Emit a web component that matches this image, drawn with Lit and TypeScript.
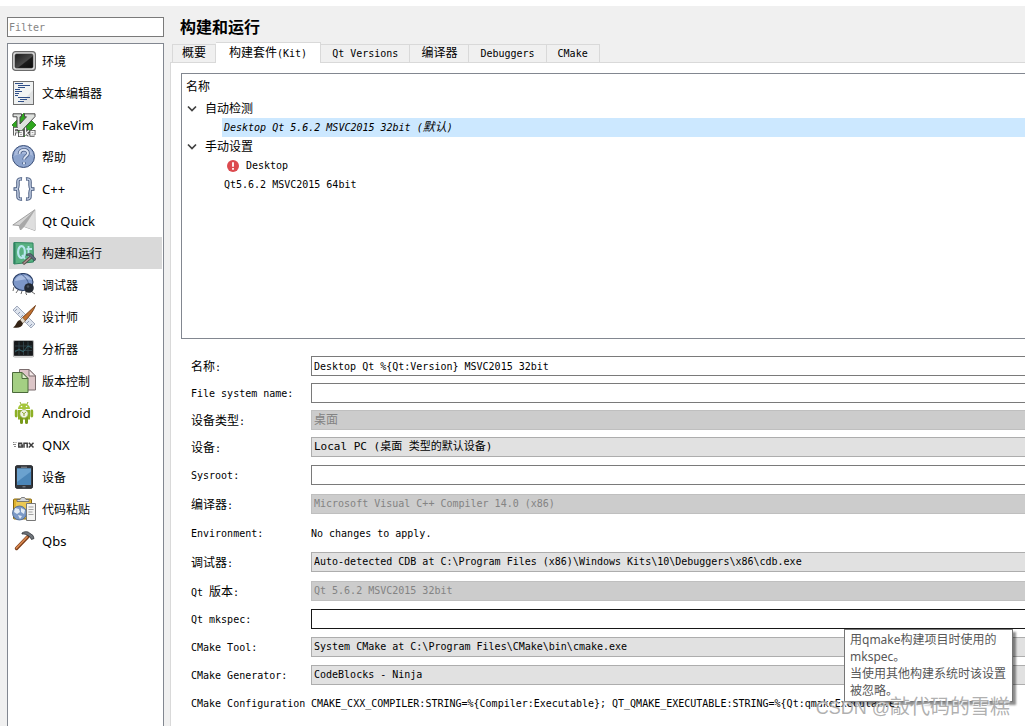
import { LitElement, html, svg, css, nothing } from "lit";
import { customElement, state } from "lit/decorators.js";

const icons: Record<string, unknown> = {
  env: svg`
    <defs><linearGradient id="g" x1="0" y1="0" x2="1" y2="1"><stop offset="0" stop-color="#1c1c1c"/><stop offset=".55" stop-color="#484848"/><stop offset=".6" stop-color="#1a1a1a"/><stop offset="1" stop-color="#0c0c0c"/></linearGradient></defs>
    <rect x=".6" y="2.6" width="22.8" height="18.8" rx="3" fill="#dcdcdc" stroke="#6b6b6b" stroke-width="1.2"/>
    <rect x="3" y="5" width="18" height="14" rx="1.5" fill="url(#g)" stroke="#333" stroke-width=".6"/>`,
  text: svg`
    <rect x="1.5" y=".5" width="20" height="23" fill="#f1f3f3" stroke="#6f6f6f" stroke-width="1"/>
    <path d="M21 9v14H8z" fill="#e0e2e3"/>
    <path d="M3 2.5h8M6 4.500h12M6 6.500h7M3 8.500h5M3 10.500h7M3 12.500h4M3 14.500h3M6 16.500h12M8 18.500h7M6 20.500h6" stroke="#2f4f88" stroke-width="1"/>`,
  vim: svg`
    <path d="M12 0l12 12-12 12L0 12z" fill="#2fa71f" stroke="#1d6612" stroke-width=".7"/>
    <path d="M1 .8h8.500v3H8v7.200l6.500-7.200h-2v-3H23v2.800L10 17.500H5V3.800H1z" fill="#dfe2df" stroke="#4a4a4a" stroke-width="1"/>
    <g fill="none" stroke="#4a4a4a" stroke-width="3"><path d="M2.500 22.500v-7h3.500M2.500 18.800h3M7.500 18.500h3v4h-3v-2h3M13.500 14.500v8M17 17.500l-3 2.500 3 2.500M22.500 22.200h-3.500v-3.700h3v2h-3"/></g>
    <g fill="none" stroke="#f6f6f6" stroke-width="1.300"><path d="M2.500 22.500v-7h3.500M2.500 18.800h3M7.500 18.500h3v4h-3v-2h3M13.500 14.500v8M17 17.500l-3 2.500 3 2.500M22.500 22.200h-3.500v-3.700h3v2h-3"/></g>`,
  help: svg`
    <circle cx="11.500" cy="11.500" r="11" fill="#8da4cd" stroke="#3c5079" stroke-width="1"/>
    <path d="M2 11a9.500 9.500 0 0 1 19 0c-5-3-13-3-19 0z" fill="#a9badb"/>
    <path d="M7.500 9c0-5.500 8.500-5.500 8.500-.8 0 3-4 3.200-4 6.300M12 17.200v2" fill="none" stroke="#4a5f88" stroke-width="3.600"/>
    <path d="M7.500 9c0-5.500 8.500-5.500 8.500-.8 0 3-4 3.200-4 6.300M12 17.200v2" fill="none" stroke="#d9e2f1" stroke-width="2"/>`,
  cpp: svg`
    <g fill="none" stroke="#42557b" stroke-width="3.400"><path d="M10 2C5 1.500 6 4 6 8s-1 4-4.500 4C5 12 6 12 6 16s-1 6.500 4 6"/><path d="M14 2c5-.5 4 2 4 6s1 4 4.500 4C19 12 18 12 18 16s1 6.500-4 6"/></g>
    <g fill="none" stroke="#c3cfe3" stroke-width="1.500"><path d="M9.400 2.100C5 1.800 6 4 6 8s-1 4-3.600 4C5 12 6 12 6 16s-1 6.200 3.400 5.900"/><path d="M14.600 2.100C19 1.800 18 4 18 8s1 4 3.600 4C19 12 18 12 18 16s1 6.200-3.400 5.900"/></g>`,
  quick: svg`
    <path d="M22.800.8L.8 16l6.200.5 1.500 4.500 3.500-3.500 11 4z" fill="#d4d4d4" stroke="#8f8f8f" stroke-width=".8"/>
    <path d="M22.800.8L7 16.500 8.500 21l3.500-3.500z" fill="#a8a8a8"/><path d="M22.800.8L12 17.500l11 4z" fill="#dedede"/><path d="M22.800.8L12 17.500" stroke="#999" stroke-width=".6"/>`,
  build: svg`
    <path d="M2 1.500L21 2l.5 19L2 23z" fill="#58b181" stroke="#2f8560" stroke-width="1"/><path d="M1.500 1.500l2 1v20l-2 .5z" fill="#2d8261"/>
    <ellipse cx="9.500" cy="11" rx="3.400" ry="5.800" fill="none" stroke="#b8e6ef" stroke-width="2.200"/><path d="M10 14l3 4M16.500 5v8.500q0 2 2 1.500M14.500 8H20" fill="none" stroke="#b8e6ef" stroke-width="1.800"/>
    <path d="M11 23l8-7" stroke="#5a4a48" stroke-width="3"/><path d="M11.500 22.500l7.500-6.500" stroke="#b09a98" stroke-width="1.200"/>
    <path d="M14.500 13.500c2-1.500 4-1 5-.5l4.500 5-1.500 2-4.500-4.500c-1-1-2-1-3.500-1z" fill="#5b6878" stroke="#33373d" stroke-width=".6"/>`,
  debug: svg`
    <path d="M2 14l-1 4M6 17l-2 3M10 18l-1 3M14 18v3l1 1M20 19l3 2" stroke="#444" fill="none" stroke-width=".8"/>
    <ellipse cx="11" cy="9" rx="10" ry="8.500" fill="#7d97c8" stroke="#2b3f66" stroke-width="1.100"/>
    <path d="M3 8c1-7 13-8 17-1-6-2-10 0-17 1z" fill="#a9bce0"/><path d="M9 1c5 3 8 8 8 13" fill="none" stroke="#334c7c" stroke-width=".8"/>
    <circle cx="17" cy="15" r="4.800" fill="#232932"/><circle cx="16" cy="13.500" r="1.300" fill="#4a535f"/>`,
  design: svg`
    <path d="M1 5l4-4 18 18-4 4z" fill="#dde3ed" stroke="#98a3b7" stroke-width=".9"/>
    <path d="M5 4l-2 2M8 7L6 9M11 10l-2 2M17 16l-2 2M20 19l-2 2" stroke="#8b98b0" stroke-width="1"/>
    <path d="M23.500.5L10 13l2.500 3.500C17 12 21.500 6 23.500.5z" fill="#c0702f" stroke="#67330f" stroke-width=".8"/>
    <path d="M10.500 12.500L8 15l2.500 3.500 3-2.500z" fill="#e2d9cc" stroke="#776652" stroke-width=".7"/>
    <path d="M8 15c-4 1-3 5-7 7.500 5 1 9 0 10-4z" fill="#352416"/>`,
  analyze: svg`
    <rect x="1.500" y="3.500" width="20" height="16.500" rx="1.500" fill="#151719" stroke="#b5b5b5" stroke-width="1.200"/>
    <rect x="2.500" y="4.500" width="18" height="13.500" fill="#17191b"/><path d="M7 4.500v13.500M11.500 4.500v13.500M16 4.500v13.500M3 9h17M3 13.500h17" stroke="#34484e" stroke-width=".8"/>
    <path d="M3 15l4-3 4 3 5-6 4 2" stroke="#3c7680" fill="none" stroke-width=".7"/><path d="M2 19.500h19" stroke="#d4d4d4" stroke-width="1.400"/>`,
  vcs: svg`
    <path d="M7.500.5H17l6.500 6.500v14h-16z" fill="#dcc5c7" stroke="#7b6d6e"/><path d="M17 .5V7h6.500z" fill="#f4e8e8" stroke="#7b6d6e"/>
    <path d="M.5 3.500H10l6 6v14H.5z" fill="#a4cf83" stroke="#4b6a3b"/><path d="M10 3.500v6h6z" fill="#dcefcb" stroke="#4b6a3b"/>`,
  android: svg`
    <path d="M8 1l1.500 3M16 1l-1.500 3" stroke="#8da82f"/><path d="M6 8c0-7.500 12-7.500 12 0z" fill="#a5c63b"/><circle cx="9.500" cy="5.500" r=".8" fill="#fff"/><circle cx="14.500" cy="5.500" r=".8" fill="#fff"/>
    <path d="M6 9h12v9.500H6z" fill="#8db025"/><rect x="2.800" y="8.500" width="2.800" height="8" rx="1.400" fill="#8db025"/><rect x="18.400" y="8.500" width="2.800" height="8" rx="1.400" fill="#8db025"/>
    <path d="M9.500 17v4.500M14.500 17v4.500" stroke="#789a1a" stroke-width="3" stroke-linecap="round"/>
    <circle cx="12" cy="12.800" r="4.200" fill="#f0f3e4" stroke="#8aa63c" stroke-width=".8"/><path d="M10 10.800l2 2 2-2M12 12.800v2.200" fill="none" stroke="#83a020" stroke-width="1"/>`,
  qnx: svg`
    <path d="M1 9.500h1.500M1 11.500h3M2 13.500h2M3.500 9.500h1" stroke="#888" stroke-width="1"/>
    <g fill="none" stroke="#3d3d3d" stroke-width="1.500"><path d="M10.300 10.200H6.800v3.800h3.400v-2h-1.700M12 14.800v-4.600h3.200v4.600M16.800 9.700l4.700 4.800M21.500 9.700l-4.700 4.800"/></g>`,
  device: svg`
    <rect x="3.500" y=".7" width="17" height="22.600" rx="1.500" fill="#34383e" stroke="#202328"/>
    <rect x="5" y="3.500" width="14" height="16.500" fill="#4b86b8"/><path d="M5 3.500h14v3L5 17z" fill="#6ba2cf"/><path d="M9 2.200h6M10.500 21.800h3" stroke="#8b9096" stroke-width="1"/>`,
  paste: svg`
    <rect x="1.500" y="2" width="18" height="20" rx="1" fill="#dfb32f" stroke="#84660f"/><rect x="4" y="4.500" width="13" height="8" fill="#ecc954"/>
    <path d="M5 4.500V2.500h3l1.500-2h3l1.500 2h3v2z" fill="#d5d8dc" stroke="#666" stroke-width=".8"/>
    <circle cx="7.500" cy="16" r="7" fill="#7c9ac6" stroke="#47658f" stroke-width=".8"/><path d="M3 11l4 1 1 3-3 2-3-2zM9 11l4 2-1 4-3-2zM6 18l4 1-2 3z" fill="#e3ecf5"/>
    <path d="M14.500 6.500h9v17h-9z" fill="#f5f5f3" stroke="#777"/><path d="M16.500 10h5M16.500 12.500h5M16.500 15h4M16.500 17.500h5" stroke="#999" stroke-width=".9"/>`,
  qbs: svg`
    <path d="M4.500 19.500L16 7.500" stroke="#7a3b17" stroke-width="3.400" stroke-linecap="round"/><path d="M4.500 19L15 8" stroke="#d98a52" stroke-width="1.800" stroke-linecap="round"/>
    <path d="M10 4c3-2 6-1.500 7.500 0l3.500 2.500 1 3-2.500 1-1.500-2.500-3-2c-1.500-1-3-1-5-1z" fill="#70757b" stroke="#303338" stroke-width=".8"/>`,
};

const nav: [string, string][] = [
  ["env", "环境"], ["text", "文本编辑器"], ["vim", "FakeVim"], ["help", "帮助"],
  ["cpp", "C++"], ["quick", "Qt Quick"], ["build", "构建和运行"], ["debug", "调试器"],
  ["design", "设计师"], ["analyze", "分析器"], ["vcs", "版本控制"], ["android", "Android"],
  ["qnx", "QNX"], ["device", "设备"], ["paste", "代码粘贴"], ["qbs", "Qbs"],
];

const tabs = ["概要", "构建套件(Kit)", "Qt Versions", "编译器", "Debuggers", "CMake"];

type Field = { id: string; label: string; kind: "input" | "select" | "text"; value?: string; disabled?: boolean; tip?: boolean };

const groups: { cls: string; fields: Field[] }[] = [
  { cls: "tight", fields: [
    { id: "name", label: "名称:", kind: "input", value: "Desktop Qt %{Qt:Version} MSVC2015 32bit" },
    { id: "fsname", label: "File system name:", kind: "input" },
    { id: "devtype", label: "设备类型:", kind: "select", value: "桌面", disabled: true },
    { id: "device", label: "设备:", kind: "select", value: "Local PC (桌面 类型的默认设备)" },
  ] },
  { cls: "loose", fields: [
    { id: "sysroot", label: "Sysroot:", kind: "input" },
    { id: "compiler", label: "编译器:", kind: "select", value: "Microsoft Visual C++ Compiler 14.0 (x86)", disabled: true },
    { id: "environment", label: "Environment:", kind: "text", value: "No changes to apply." },
    { id: "debugger", label: "调试器:", kind: "select", value: "Auto-detected CDB at C:\\Program Files (x86)\\Windows Kits\\10\\Debuggers\\x86\\cdb.exe" },
    { id: "qtversion", label: "Qt 版本:", kind: "select", value: "Qt 5.6.2 MSVC2015 32bit", disabled: true },
  ] },
  { cls: "normal", fields: [
    { id: "mkspec", label: "Qt mkspec:", kind: "input", tip: true },
    { id: "cmaketool", label: "CMake Tool:", kind: "select", value: "System CMake at C:\\Program Files\\CMake\\bin\\cmake.exe" },
    { id: "generator", label: "CMake Generator:", kind: "select", value: "CodeBlocks - Ninja" },
    { id: "config", label: "CMake Configuration", kind: "text", value: "CMAKE_CXX_COMPILER:STRING=%{Compiler:Executable}; QT_QMAKE_EXECUTABLE:STRING=%{Qt:qmakeExecutable}" },
  ] },
];

const isHan = (s: string) => /[\u3000-\u9fff]/.test(s);

/** Sets Chinese runs one step larger than the fixed-width Latin beside them. */
const mixed = (s: string) =>
  s.split(/([\u3000-\u9fff]+)/).filter(Boolean).map((p) => (isHan(p) ? html`<span class="han">${p}</span>` : p));

@customElement("app-root")
export class AppRoot extends LitElement {
  @state() private page = "build";
  @state() private tab = 1;

  static styles = css`
    :host { display: flex; flex-direction: column; position: relative; box-sizing: border-box; height: 100vh; min-height: 100%;
      padding-top: 6px; overflow: hidden; background: #fff; color: #000;
      font: 10px/16px "DejaVu Sans Mono", "Noto Sans CJK SC", monospace; }
    *, *::before { box-sizing: border-box; }
    button, input, select { font: inherit; color: inherit; margin: 0; border-radius: 0; }
    ul { list-style: none; margin: 0; padding: 0; }
    .han { font-size: 12px; }
    .dialog { flex: 1; min-height: 0; display: grid; grid-template-columns: 157px minmax(0, 1fr); column-gap: 6px; padding: 11px 0 0 7px; background: #f0f0f0; }
    .side { display: flex; flex-direction: column; gap: 6px; min-height: 0; }
    .filter { height: 20px; width: 100%; padding: 0 1px; border: 1px solid #7a7a7a; background: #fff; outline: none; }
    .filter::placeholder { color: #858585; opacity: 1; }
    .nav { flex: 1; padding: 1px; border: 1px solid #828790; border-bottom: 0; background: #fff; }
    .item { display: flex; align-items: center; gap: 6px; width: 100%; height: 32px; padding: 0 3px; border: 0; background: none; text-align: left;
      font: 13px/16px "Noto Sans", "Noto Sans CJK SC", sans-serif; }
    .item.current { background: #d9d9d9; }
    .icon { width: 24px; height: 24px; flex: none; }
    .main { display: flex; flex-direction: column; min-width: 0; min-height: 0; }
    .title { margin: 0; padding-left: 10px; font: bold 16px/18px "Noto Sans CJK SC", sans-serif; }
    .tabs { display: flex; align-items: flex-end; height: 27px; padding-left: 2px; }
    .tab { height: 18px; padding: 0 11px; border: 1px solid #d9d9d9; border-left-width: 0; border-bottom: 0; background: #f0f0f0; line-height: 16px; white-space: nowrap; }
    .tab:first-child { padding: 0 9px; border-left-width: 1px; }
    .tab.current { height: 21px; padding: 0 13px; margin-bottom: -1px; background: #fff; z-index: 1; line-height: 18px; }
    .panel { flex: 1; display: flex; flex-direction: column; gap: 17px; padding: 10px 0 0 10px; border: 1px solid #d9d9d9; border-width: 1px 0 0 1px; background: #fff; }
    .tree { height: 266px; border: 1px solid #828790; border-right: 0; }
    .head { height: 25px; padding-left: 4px; line-height: 26px; }
    .row { display: flex; align-items: center; height: 19px; }
    .branch { gap: 7px; padding: 0 0 0 4px; width: 100%; border: 0; background: none; }
    .leaf { margin-left: 40px; padding-left: 2px; }
    .leaf.chosen { background: #cce8ff; font-style: italic; }
    .alert { width: 12px; height: 12px; margin: 0 7px 0 3px; }
    .form { display: flex; flex-direction: column; gap: 8px; padding-left: 10px; }
    .group { display: flex; flex-direction: column; }
    .tight { gap: 7px; } .loose { gap: 9px; } .normal { gap: 8px; }
    .field { position: relative; display: grid; grid-template-columns: 120px minmax(0, 1fr); align-items: center; height: 20px; white-space: nowrap; }
    .field label, .field output { padding-top: 2px; }
    .box { width: 100%; height: 20px; padding: 0 2px; border: 1px solid #7a7a7a; border-right: 0; background: #fff; outline: none; appearance: none; }
    select.box { border-color: #adadad; background: #e1e1e1; }
    select.box:disabled { border-color: #bfbfbf; background: #ccc; color: #838383; opacity: 1; }
    .box.hot { border-color: #171717; }
    .box.han { font-size: 12px; }
    .box.blend { font-size: 11px; }
    .tip { position: absolute; z-index: 2; top: 20px; right: 12px; width: 169px; padding: 1px 5px 2px; border: 1px solid #767676; background: #fff; color: #575757;
      box-shadow: 3px 3px 2px rgba(0, 0, 0, .45); font: 12px/17px "Noto Sans", "Noto Sans CJK SC", sans-serif; white-space: normal; }
    .mark { position: absolute; z-index: 3; right: 15px; bottom: 5px; color: rgba(150, 150, 150, .75); text-shadow: 1px 1px 1px #fff;
      font: 20px/26px "Liberation Sans", "Noto Sans CJK SC", sans-serif; pointer-events: none; }
    .mark small { font-size: 18px; }
  `;

  private control(f: Field) {
    if (f.kind === "text") return html`<output id=${f.id}>${f.value}</output>`;
    if (f.kind === "input") return html`<input id=${f.id} class="box ${f.tip ? "hot" : ""}" type="text" .value=${f.value ?? ""} />`;
    const v = f.value ?? "";
    const size = !isHan(v) ? "" : /[A-Za-z]/.test(v) ? "blend" : "han";
    return html`<select id=${f.id} class="box ${size}" ?disabled=${f.disabled}><option>${v}</option></select>`;
  }

  private branch(label: string) {
    return html`<button class="row branch" aria-expanded="true">
      <svg width="12" height="12" viewBox="0 0 12 12" aria-hidden="true"><path d="M2 3.500l4 4 4-4" fill="none" stroke="#404040" stroke-width="1.700"/></svg>
      <span class="han">${label}</span></button>`;
  }

  render() {
    return html`
      <div class="dialog">
        <aside class="side">
          <input class="filter" type="text" placeholder="Filter" aria-label="Filter" />
          <ul class="nav">
            ${nav.map(([id, label]) => html`<li><button class="item ${this.page === id ? "current" : ""}" @click=${() => (this.page = id)}>
              <svg class="icon" viewBox="0 0 24 24" aria-hidden="true">${icons[id]}</svg><span>${mixed(label)}</span></button></li>`)}
          </ul>
        </aside>
        <main class="main">
          <h1 class="title">构建和运行</h1>
          <div class="tabs" role="tablist">
            ${tabs.map((t, i) => html`<button class="tab ${this.tab === i ? "current" : ""}" role="tab" aria-selected=${this.tab === i} @click=${() => (this.tab = i)}>${mixed(t)}</button>`)}
          </div>
          <section class="panel">
            <div class="tree">
              <div class="head"><span class="han">名称</span></div>
              ${this.branch("自动检测")}
              <div class="row leaf chosen"><span>${mixed("Desktop Qt 5.6.2 MSVC2015 32bit (默认)")}</span></div>
              ${this.branch("手动设置")}
              <div class="row leaf">
                <svg class="alert" viewBox="0 0 12 12" aria-hidden="true"><circle cx="6" cy="6" r="6" fill="#dc4a4f"/><path d="M6 2.300v4.400M6 8v1.800" stroke="#fff" stroke-width="1.800"/></svg>
                <span>Desktop</span></div>
              <div class="row leaf"><span>Qt5.6.2 MSVC2015 64bit</span></div>
            </div>
            <form class="form" @submit=${(e: Event) => e.preventDefault()}>
              ${groups.map((g) => html`<div class="group ${g.cls}">
                ${g.fields.map((f) => html`<div class="field">
                  <label for=${f.id}>${mixed(f.label)}</label>${this.control(f)}
                  ${f.tip ? html`<div class="tip" role="tooltip">用qmake构建项目时使用的mkspec。<br />当使用其他构建系统时该设置被忽略。</div>` : nothing}
                </div>`)}
              </div>`)}
            </form>
          </section>
        </main>
      </div>
      <div class="mark"><small>CSDN @</small>敲代码的雪糕</div>
    `;
  }
}
